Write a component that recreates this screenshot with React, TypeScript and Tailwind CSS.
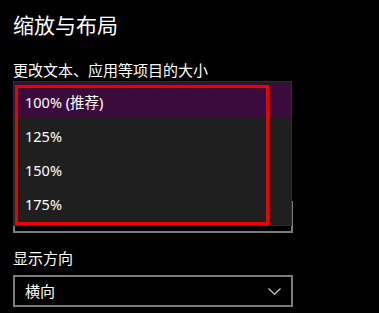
const options = ["100% (推荐)", "125%", "150%", "175%"]

function Chevron() {
  return (
    <svg width="13" height="7" viewBox="0 0 13 7" fill="none" className="text-[#cfcfcf]">
      <path d="M0.5 0.5 L6.5 6.2 L12.5 0.5" stroke="currentColor" strokeWidth="1.1" />
    </svg>
  )
}

export default function App() {
  return (
    <div
      className="w-[379px] h-[313px] overflow-hidden bg-black text-white px-[13px] pt-[11px]"
      style={{ fontFamily: '"Noto Sans", "Noto Sans CJK SC", sans-serif' }}
    >
      <h1 className="text-[21px] leading-[28px] font-normal">缩放与布局</h1>

      <p className="mt-[21px] text-[15px] leading-[20px]">更改文本、应用等项目的大小</p>

      {/* scale combobox, opened */}
      <div className="relative mt-[1px] w-[280px] h-[152px] pt-[120px]">
        <div className="h-[32px] border-2 border-[#7a7a7a]" />

        <div className="absolute left-0 top-0 w-[279px] h-[145px] bg-[#1f1f1f] border border-[#2c2c2c] pt-[2px]">
          {options.map((o, i) => (
            <div
              key={o}
              className={`h-[34px] pt-[4px] pl-[11px] flex items-center text-[14.5px] ${
                i === 0 ? "bg-[#3a0b3b]" : ""
              }`}
            >
              {o}
            </div>
          ))}
        </div>

        {/* annotation frame */}
        <div className="absolute left-[2px] top-[4px] w-[254px] h-[140px] border-[3px] border-[#f00000]" />
      </div>

      <p className="mt-[15px] text-[15px] leading-[20px]">显示方向</p>

      <div className="mt-[7px] w-[280px] h-[32px] border-2 border-[#7a7a7a] flex items-center justify-between pl-[10px] pr-[10px]">
        <span className="text-[15px]">横向</span>
        <Chevron />
      </div>
    </div>
  )
}
